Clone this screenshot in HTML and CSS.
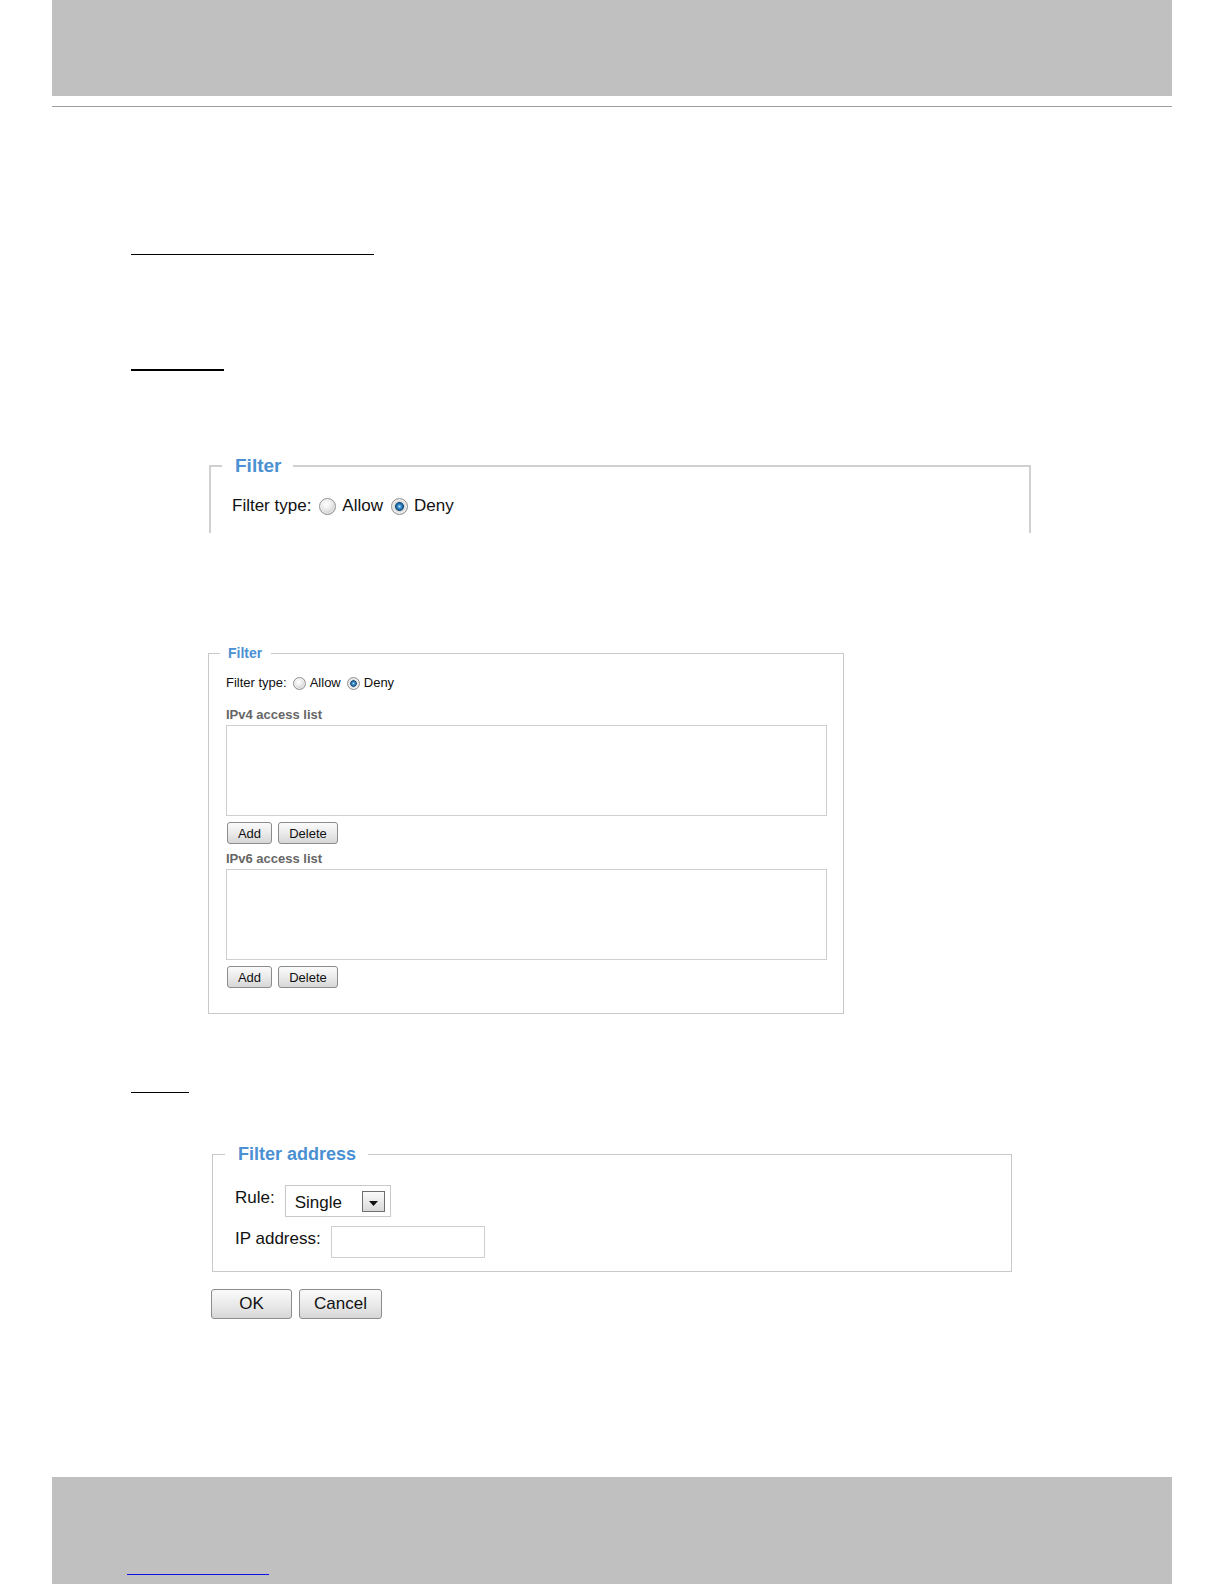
FILE: index.html
```html
<!DOCTYPE html>
<html lang="en">
<head>
<meta charset="utf-8">
<title>Access List – Filter</title>
<link rel="stylesheet" href="styles.css">
</head>
<body>
<div class="page">
  <header class="page-header"></header>
  <div class="header-rule"></div>

  <main class="main">
    <a class="link-line link-line--one" href="#"></a>
    <a class="link-line link-line--two" href="#"></a>

    <fieldset class="box box--large">
      <legend class="box-legend">Filter</legend>
      <div class="box-body">
        <div class="filter-row">
          <span class="filter-label">Filter type:</span>
          <label class="radio-option"><input class="radio" type="radio" name="ft1"><span>Allow</span></label>
          <label class="radio-option"><input class="radio" type="radio" name="ft1" checked><span>Deny</span></label>
        </div>
      </div>
    </fieldset>

    <fieldset class="box box--small">
      <legend class="box-legend">Filter</legend>
      <div class="box-body">
        <div class="filter-row">
          <span class="filter-label">Filter type:</span>
          <label class="radio-option"><input class="radio" type="radio" name="ft2"><span>Allow</span></label>
          <label class="radio-option"><input class="radio" type="radio" name="ft2" checked><span>Deny</span></label>
        </div>

        <div class="access-label access-label--first">IPv4 access list</div>
        <textarea class="access-list"></textarea>
        <div class="btn-row">
          <button class="btn-sm btn-add" type="button">Add</button>
          <button class="btn-sm btn-delete" type="button">Delete</button>
        </div>

        <div class="access-label">IPv6 access list</div>
        <textarea class="access-list"></textarea>
        <div class="btn-row">
          <button class="btn-sm btn-add" type="button">Add</button>
          <button class="btn-sm btn-delete" type="button">Delete</button>
        </div>
      </div>
    </fieldset>

    <a class="link-line link-line--three" href="#"></a>

    <fieldset class="box box--address">
      <legend class="box-legend">Filter address</legend>
      <div class="box-body">
        <div class="addr-row">
          <span class="addr-label">Rule:</span>
          <div class="select">
            <span class="select-value">Single</span>
            <span class="select-btn">
              <svg width="9" height="5" viewBox="0 0 9 5"><path d="M0 0 H9 L4.5 5 Z" fill="#111"/></svg>
            </span>
          </div>
        </div>
        <div class="addr-row addr-row--ip">
          <span class="addr-label">IP address:</span>
          <input class="ip-input" type="text">
        </div>
      </div>
    </fieldset>

    <div class="action-row">
      <button class="btn-lg btn-ok" type="button">OK</button>
      <button class="btn-lg btn-cancel" type="button">Cancel</button>
    </div>
  </main>

  <footer class="page-footer">
    <a class="footer-link" href="#"></a>
  </footer>
</div>
</body>
</html>
```

FILE: styles.css
```css
* {
  box-sizing: border-box;
}

html,
body {
  margin: 0;
  padding: 0;
  background: #ffffff;
}

body {
  font-family: "Liberation Sans", Arial, sans-serif;
  color: #1a1a1a;
  overflow: hidden;
}

.page {
  width: 1120px;
  margin: 0 auto;
}

.page-header {
  height: 96px;
  background: #c0c0c0;
}

.header-rule {
  height: 1px;
  margin-top: 10px;
  background: #9d9d9d;
}

.main {
  padding-left: 79px;
}

/* empty hyperlink underlines */
.link-line {
  display: block;
  height: 0;
  border-top: 1px solid #000000;
}

.link-line--one {
  width: 243px;
  margin-top: 147px;
}

.link-line--two {
  width: 93px;
  margin-top: 114px;
  border-top-width: 2px;
}

.link-line--three {
  width: 58px;
  margin-top: 78px;
}

/* fieldset boxes */
.box {
  margin: 0;
  padding: 0;
  min-width: 0;
  border: 1px solid #c9c9c9;
}

.box-legend {
  font-weight: bold;
  color: #4a90d2;
  white-space: nowrap;
}

.box-body {
  display: block;
}

/* large (zoomed) filter box */
.box--large {
  width: 822px;
  margin-top: 83px;
  margin-left: 78px;
  border: 2px solid #d0d0d0;
  border-bottom: none;
}

.box--large .box-legend {
  margin-left: 11px;
  padding: 0 12px 0 13px;
  font-size: 19px;
  line-height: 24px;
}

.box--large .box-body {
  padding: 18px 0 17px 21px;
}

.box--large .filter-row {
  font-size: 17px;
  line-height: 20px;
}

.box--large .radio-option {
  margin-left: 8px;
  gap: 6px;
}

.box--large .radio-option:first-of-type {
  margin-left: 8px;
}

/* small filter box */
.box--small {
  width: 636px;
  margin-top: 112px;
  margin-left: 77px;
}

.box--small .box-legend {
  margin-left: 11px;
  padding: 0 9px 0 8px;
  font-size: 14px;
  line-height: 16px;
}

.box--small .box-body {
  padding: 14px 0 25px 17px;
}

.box--small .filter-row {
  font-size: 13px;
  line-height: 16px;
}

.box--small .radio-option {
  margin-left: 6px;
  gap: 4px;
}

/* filter type row */
.filter-row {
  display: flex;
  align-items: center;
  color: #111111;
}

.radio-option {
  display: flex;
  align-items: center;
}

.radio {
  appearance: none;
  -webkit-appearance: none;
  font-size: inherit;
  width: 1em;
  height: 1em;
  margin: 0;
  border-radius: 50%;
  border: 1px solid #8f8f8f;
  background: radial-gradient(circle at 42% 35%, #ffffff 0%, #eeeeee 35%, #cacaca 80%, #b5b5b5 100%);
  box-shadow: inset 0 0 0 1px rgba(255, 255, 255, 0.5);
  flex: none;
}

.radio:checked {
  background: radial-gradient(circle at 50% 50%, #c6ebfb 0%, #4a9bd6 14%, #1d659f 30%, #124a7a 38%, #d8d8d8 45%, #e6e6e6 58%, #bdbdbd 100%);
}

/* access lists */
.access-label {
  margin-top: 7px;
  font-size: 13px;
  line-height: 16px;
  font-weight: bold;
  color: #666666;
}

.access-label--first {
  margin-top: 16px;
}

.access-list {
  display: block;
  width: 601px;
  height: 91px;
  margin: 2px 0 0;
  padding: 0;
  border: 1px solid #cfcfcf;
  background: #ffffff;
  resize: none;
}

.btn-row {
  display: flex;
  gap: 6px;
  margin-top: 6px;
  margin-left: 1px;
}

.btn-sm,
.btn-lg {
  margin: 0;
  padding: 0;
  font-family: inherit;
  color: #111111;
  border: 1px solid #8c8c8c;
  border-radius: 3px;
  background: linear-gradient(#fbfbfb, #e9e9e9 55%, #d6d6d6);
}

.btn-sm {
  height: 22px;
  font-size: 13px;
}

.btn-add {
  width: 45px;
}

.btn-delete {
  width: 60px;
}

/* address box */
.box--address {
  width: 800px;
  margin-top: 50px;
  margin-left: 81px;
}

.box--address .box-legend {
  margin-left: 12px;
  padding: 0 12px 0 13px;
  font-size: 18px;
  line-height: 22px;
}

.box--address .box-body {
  padding: 20px 0 13px 22px;
}

.addr-row {
  display: flex;
  align-items: flex-start;
}

.addr-row--ip {
  margin-top: 9px;
}

.addr-label {
  margin-top: 3px;
  margin-right: 10px;
  font-size: 17px;
  line-height: 20px;
  color: #111111;
}

.select {
  display: flex;
  align-items: center;
  justify-content: space-between;
  width: 106px;
  height: 32px;
  padding: 0 5px 0 9px;
  border: 1px solid #c9c9c9;
  background: #ffffff;
}

.select-value {
  padding-top: 3px;
  font-size: 17px;
  line-height: 20px;
  color: #111111;
}

.select-btn {
  display: flex;
  align-items: center;
  justify-content: center;
  width: 23px;
  height: 21px;
  padding-top: 4px;
  border: 1px solid #6e6e6e;
  background: linear-gradient(#fbfbfb, #d9d9d9);
}

.select-btn svg {
  display: block;
}

.ip-input {
  width: 154px;
  height: 32px;
  margin: 0;
  padding: 0;
  border: 1px solid #cfcfcf;
  background: #ffffff;
}

.action-row {
  display: flex;
  gap: 7px;
  margin-top: 17px;
  margin-left: 80px;
}

.btn-lg {
  height: 30px;
  font-size: 17px;
}

.btn-ok {
  width: 81px;
}

.btn-cancel {
  width: 83px;
}

/* footer */
.page-footer {
  height: 107px;
  margin-top: 158px;
  padding: 97px 0 0 75px;
  background: #c0c0c0;
}

.footer-link {
  display: block;
  width: 142px;
  height: 0;
  border-top: 1px solid #1010ee;
}
```
